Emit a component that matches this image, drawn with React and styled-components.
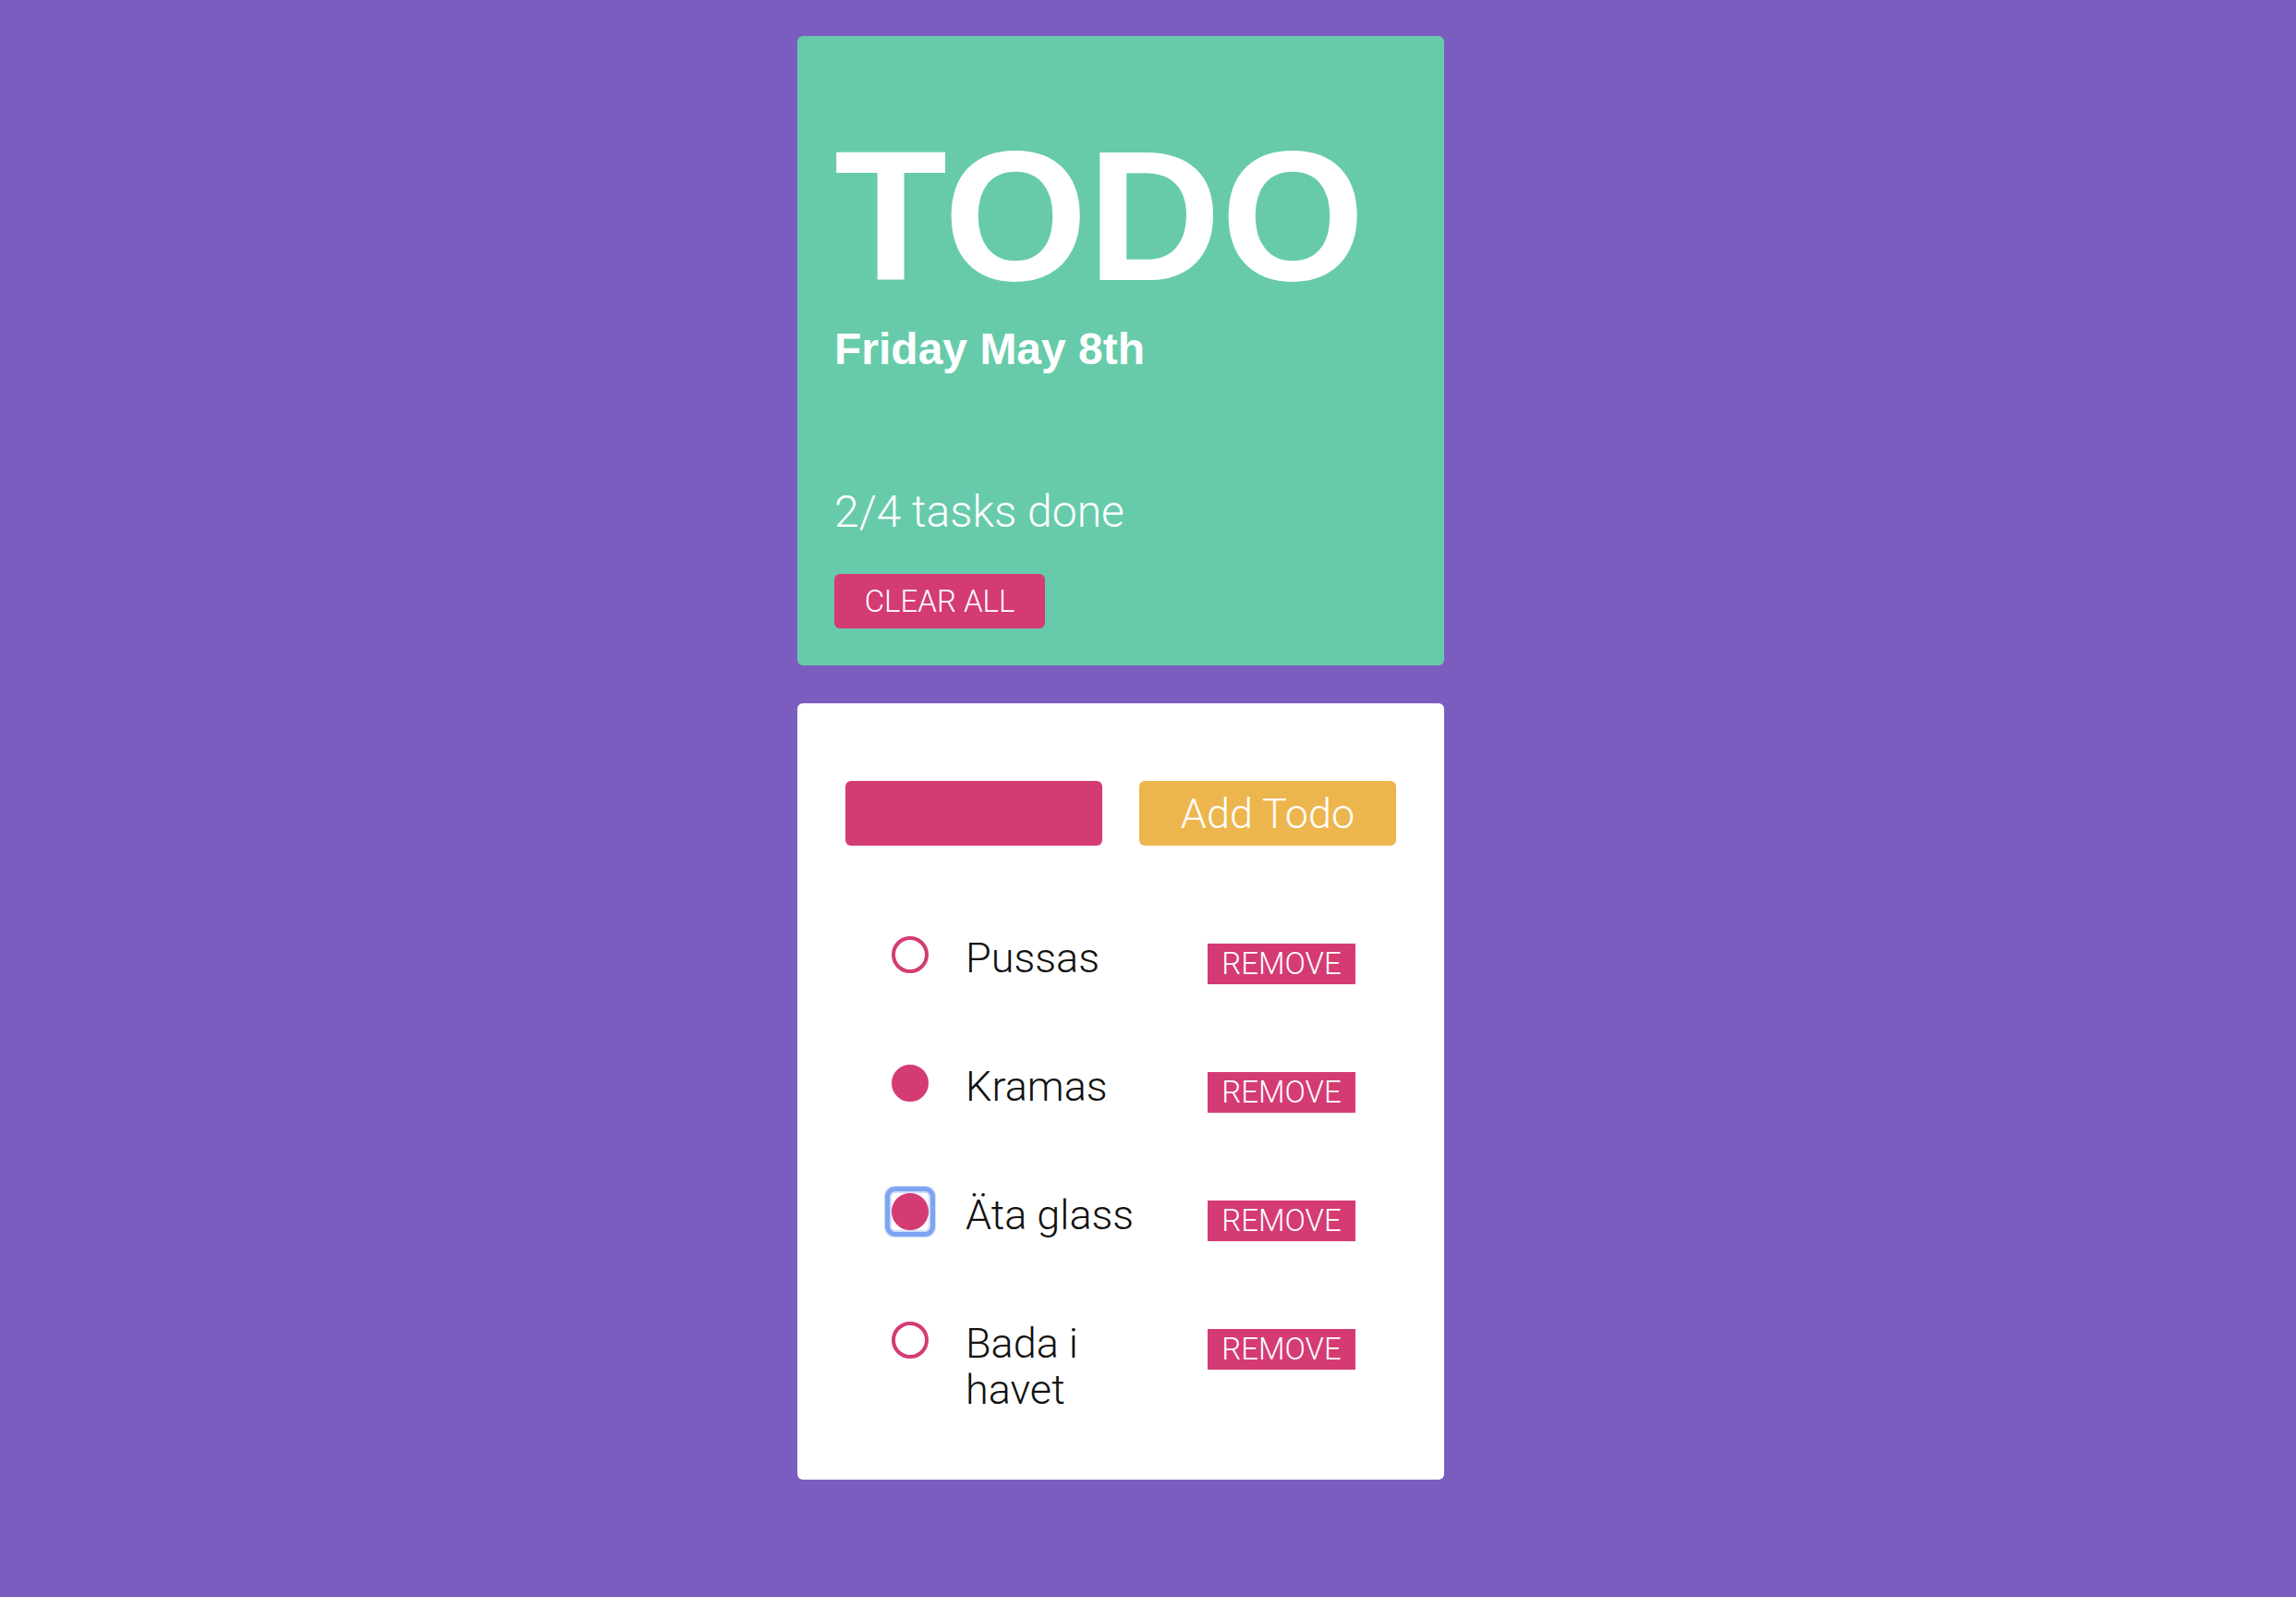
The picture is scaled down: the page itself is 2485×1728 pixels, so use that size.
import React, { useState } from 'react';
import styled, { createGlobalStyle, css } from 'styled-components';

const PINK = '#d43b74';

const GlobalStyle = createGlobalStyle`
    html, body {
        margin: 0;
        background: #7b5dbf;
    }
`

const Page = styled.main`
    display: flex;
    flex-direction: column;
    align-items: center;
    gap: 41px;
    padding: 39px 59px 40px 0;
`

const HeaderCard = styled.section`
    box-sizing: border-box;
    width: 700px;
    padding: 40px;
    border-radius: 6px;
    background: #67cbab;
    display: flex;
    flex-direction: column;
    align-items: flex-start;
    color: #fff;
`

const Title = styled.h1`
    margin: 55px 0 0;
    font: 700 200px/1 "Liberation Sans", Arial, sans-serif;
`

const DateLine = styled.h2`
    margin: 15px 0 0;
    font: 700 48px/1.2 "Liberation Sans", Arial, sans-serif;
`

const Progress = styled.p`
    margin: 118px 0 0;
    font: 300 48px/1.2 Roboto, "Liberation Sans", sans-serif;
`

const ClearButton = styled.button`
    margin-top: 39px;
    width: 228px;
    height: 59px;
    padding: 0;
    border: none;
    border-radius: 6px;
    background: ${PINK};
    color: #fff;
    font: 300 33px Roboto, "Liberation Sans", sans-serif;
    cursor: pointer;
`

const ListCard = styled.section`
    box-sizing: border-box;
    width: 700px;
    padding: 84px 52px 29px;
    border-radius: 6px;
    background: #fff;
`

const TodoForm = styled.div`
    display: grid;
    grid-template-columns: 1fr 1fr;
    gap: 40px;
    height: 70px;
`

const TodoInput = styled.input`
    border: none;
    border-radius: 6px;
    background: ${PINK};
    outline: none;
    color: #fff;
    font: 300 40px Roboto, sans-serif;
    padding: 0 16px;
    min-width: 0;
`

const AddButton = styled.button`
    border: none;
    border-radius: 6px;
    background: #edb54d;
    color: #fff;
    font: 300 45px Roboto, "Liberation Sans", sans-serif;
    padding: 0;
    cursor: pointer;
`

const TodoList = styled.ul`
    list-style: none;
    margin: 54px 0 0;
    padding: 0;
`

const TodoRow = styled.li`
    display: flex;
    align-items: flex-start;
    padding: 43px 44px 43px 50px;
`

const RadioBox = styled.span`
    flex: 0 0 40px;
    width: 40px;
    height: 40px;
    margin-top: 1px;
    border-radius: 4px;
    display: grid;
    place-items: center;
    background: #fff;
    cursor: pointer;
    ${props => props.focused && css`
        outline: 5px solid #7ea4f2;
        outline-offset: 2px;
        box-shadow: 0 0 0 8px rgba(126, 164, 242, 0.35);
    `}
`

const Radio = styled.span`
    box-sizing: border-box;
    width: 40px;
    height: 40px;
    border-radius: 50%;
    border: 4px solid ${PINK};
    background: ${props => props.checked ? PINK : 'transparent'};
`

const TodoText = styled.span`
    flex: 0 0 215px;
    margin-left: 40px;
    font: 300 45px/50px Roboto, "Liberation Sans", sans-serif;
    color: #111;
`

const RemoveButton = styled.button`
    margin-left: auto;
    margin-top: 9px;
    width: 160px;
    height: 44px;
    padding: 0;
    border: none;
    background: ${PINK};
    color: #fff;
    font: 300 33px/44px Roboto, "Liberation Sans", sans-serif;
    cursor: pointer;
`

const initialTodos = [
    { id: 1, text: 'Pussas', done: false },
    { id: 2, text: 'Kramas', done: true },
    { id: 3, text: 'Äta glass', done: true },
    { id: 4, text: 'Bada i havet', done: false },
]

const App = () => {
    const [todos, setTodos] = useState(initialTodos);
    const [inputValue, setInputValue] = useState('');
    const [focusedId, setFocusedId] = useState(3);

    const toggle = (id) => {
        setFocusedId(id);
        setTodos(todos.map(t => t.id === id ? { ...t, done: !t.done } : t));
    }

    const addTodo = () => {
        if (!inputValue) return;
        setTodos([...todos, { id: Date.now(), text: inputValue, done: false }]);
        setInputValue('');
    }

    const doneCount = todos.filter(t => t.done).length;

    return <>
        <GlobalStyle />
        <Page>
            <HeaderCard>
                <Title>TODO</Title>
                <DateLine>Friday May 8th</DateLine>
                <Progress>{doneCount}/{todos.length} tasks done</Progress>
                <ClearButton onClick={() => setTodos([])}>CLEAR ALL</ClearButton>
            </HeaderCard>
            <ListCard>
                <TodoForm>
                    <TodoInput type="text" value={inputValue} onChange={e => setInputValue(e.target.value)} />
                    <AddButton onClick={addTodo}>Add Todo</AddButton>
                </TodoForm>
                <TodoList>
                    {todos.map(todo => (
                        <TodoRow key={todo.id}>
                            <RadioBox focused={focusedId === todo.id} onClick={() => toggle(todo.id)}>
                                <Radio checked={todo.done} />
                            </RadioBox>
                            <TodoText>{todo.text}</TodoText>
                            <RemoveButton onClick={() => setTodos(todos.filter(t => t.id !== todo.id))}>
                                REMOVE
                            </RemoveButton>
                        </TodoRow>
                    ))}
                </TodoList>
            </ListCard>
        </Page>
    </>
}

export default App;
